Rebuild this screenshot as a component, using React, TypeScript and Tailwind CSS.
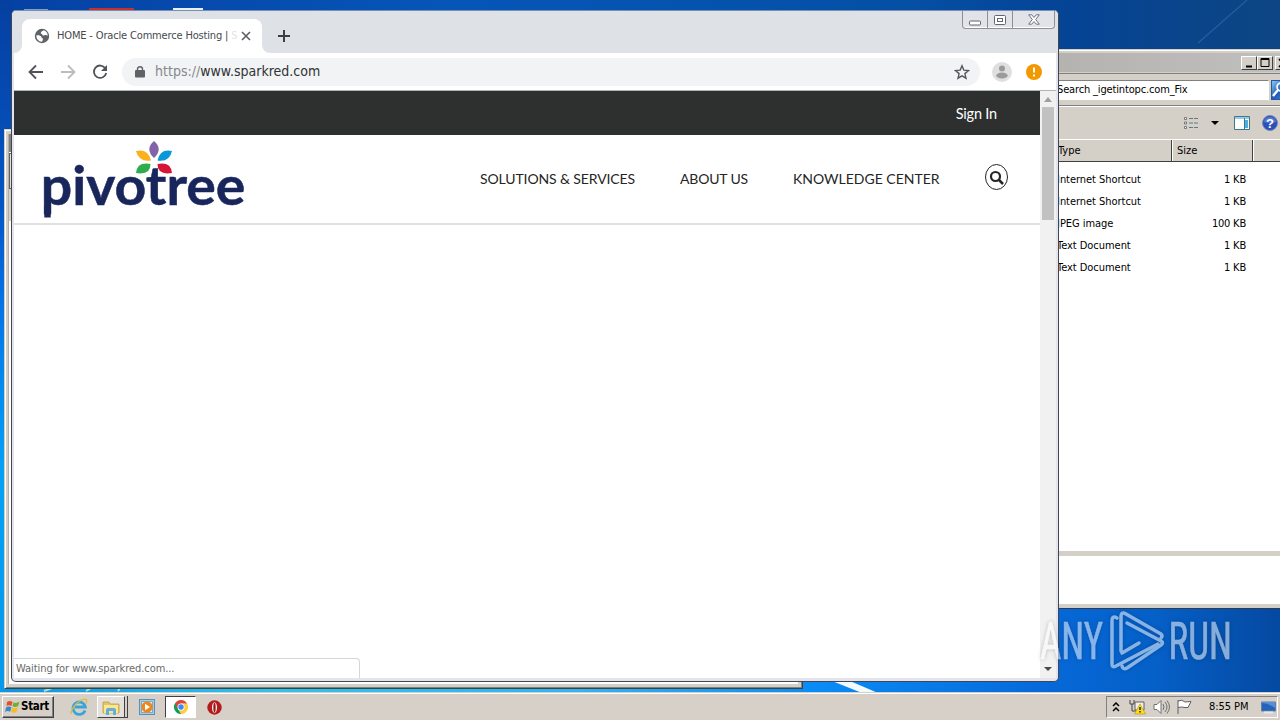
import { clsx } from "clsx";
import type { ReactNode } from "react";

const files = [
  { type: "Internet Shortcut", size: "1 KB" },
  { type: "Internet Shortcut", size: "1 KB" },
  { type: "JPEG image", size: "100 KB" },
  { type: "Text Document", size: "1 KB" },
  { type: "Text Document", size: "1 KB" },
];

const ui = "font-['Tahoma','DejaVu_Sans_Condensed','DejaVu_Sans',sans-serif]";

function Wallpaper() {
  return (
    <svg className="absolute inset-0" width="1280" height="720" viewBox="0 0 1280 720">
      <defs>
        <linearGradient id="left" x1="0" y1="0" x2="0" y2="1">
          <stop offset="0" stopColor="#0540a0" />
          <stop offset="0.28" stopColor="#0555c4" />
          <stop offset="0.42" stopColor="#0573e6" />
          <stop offset="0.65" stopColor="#05a0f5" />
          <stop offset="1" stopColor="#0898e8" />
        </linearGradient>
        <linearGradient id="top" x1="0" y1="0" x2="1" y2="0">
          <stop offset="0" stopColor="#0641a4" />
          <stop offset="0.35" stopColor="#0656b8" />
          <stop offset="0.7" stopColor="#0550a6" />
          <stop offset="0.84" stopColor="#054394" />
          <stop offset="1" stopColor="#0e4683" />
        </linearGradient>
        <linearGradient id="bottom" x1="0" y1="0" x2="1" y2="0">
          <stop offset="0" stopColor="#0a98e4" />
          <stop offset="0.2" stopColor="#2cc4ee" />
          <stop offset="0.45" stopColor="#30b4f2" />
          <stop offset="0.63" stopColor="#0a8cf6" />
          <stop offset="0.82" stopColor="#0668d8" />
          <stop offset="0.9" stopColor="#0560c8" />
          <stop offset="1" stopColor="#0549a0" />
        </linearGradient>
      </defs>
      <rect width="1280" height="720" fill="url(#left)" />
      <rect x="12" width="1268" height="400" fill="url(#top)" />
      <rect x="12" y="600" width="1268" height="120" fill="url(#bottom)" />
      <path d="M1247 0 1198 43" stroke="#5c8abb" strokeWidth="1.2" opacity=".35" />
      <path d="M832 681 850 681 878 693 862 693Z" fill="#fff" opacity=".95" />
      <path d="M44 691 52 688M86 691 91 688M118 691 120 688" stroke="#c4f4e0" strokeWidth="2" opacity=".8" />
      <rect x="24" y="9" width="24" height="2" fill="#7f9fc4" />
      <rect x="89" y="8" width="45" height="3" fill="#c9302c" />
      <rect x="173" y="8" width="30" height="3" fill="#e8f0f6" />
    </svg>
  );
}

function BackWindow() {
  return (
    <div className="absolute left-1 top-[129px] flex h-[560px] w-[799px] border border-[#d4d0c8] border-b-[#404040] border-r-[#404040] bg-[#d4d0c8] shadow-[inset_1px_1px_#fff,inset_-1px_-1px_#808080]">
      <div className="mb-1 ml-[3px] mr-1 mt-1 flex-1 border-l border-[#b0aca6] bg-white">
        <div className="h-[18px] bg-[#808080]" />
        <div className="mt-px h-9 border border-[#606060] bg-[#e4e1dc]" />
        <div className="h-8 bg-[#d4d0c8]" />
      </div>
    </div>
  );
}

function CaptionButton({ children }: { children: ReactNode }) {
  return (
    <div className="flex h-[14px] w-4 shrink-0 items-center justify-center border border-white border-b-[#404040] border-r-[#404040] bg-[#d4d0c8]">
      {children}
    </div>
  );
}

function Explorer() {
  return (
    <div className={clsx(ui, "absolute left-[1040px] top-[49px] flex h-[560px] w-[260px] flex-col border-y border-t-[#d4d0c8] border-b-[#303c50] bg-[#d4d0c8] pb-1 text-[11px] text-black")}>
      <div className="h-px shrink-0 bg-white" />
      <div className="mt-[2px] flex h-[19px] shrink-0 items-center bg-linear-to-r from-[#b4b2ae] to-[#c0c0c0] pl-[201px]">
        <CaptionButton>
          <svg width="12" height="12"><path d="M3 9.5h6" stroke="#000" strokeWidth="2" /></svg>
        </CaptionButton>
        <CaptionButton>
          <svg width="12" height="12"><path d="M2 1.500h8v8H2zM2 2.500h8" fill="none" stroke="#000" /></svg>
        </CaptionButton>
        <div className="w-[2px] shrink-0" />
        <CaptionButton>
          <svg width="12" height="12"><path d="m2 2 8 8M10 2 2 10" stroke="#000" strokeWidth="1.7" /></svg>
        </CaptionButton>
      </div>
      <div className="mt-px h-px shrink-0 bg-[#808080]" />
      <div className="flex h-[32px] shrink-0 items-center border-b border-[#808080] pt-px">
        <div className="flex h-[21px] w-[229px] items-center border border-r-[#fff] border-t-[#808080] border-[#d4d0c8] bg-white pl-[16px] pt-px">
          <span className="whitespace-nowrap text-[11px] tracking-[-0.15px]">Search _igetintopc.com_Fix</span>
        </div>
        <div className="ml-[2px] flex h-5 w-5 shrink-0 items-center border border-[#235a9e] bg-linear-to-br from-[#8ac8ee] via-[#2458bc] to-[#3c9ce0]">
          <svg width="18" height="18" viewBox="0 0 18 18" fill="none" stroke="#fff">
            <circle cx="9" cy="6" r="4" strokeWidth="1.6" />
            <path d="M6 9 1 15" strokeWidth="2.4" />
          </svg>
        </div>
      </div>
      <div className="flex h-[33px] shrink-0 items-center border-t border-white pl-[143px]">
        <svg width="16" height="14" viewBox="0 0 16 14" fill="none">
          <path d="M1.500 1.500h2v2h-2zM1.500 6h2v2h-2zM1.500 10.500h2v2h-2z" fill="#fff" stroke="#777" />
          <path d="M6 2.500h4M11 2.500h4M6 7h4M11 7h4M6 11.500h4M11 11.500h4" stroke="#607a88" />
        </svg>
        <svg className="ml-3" width="8" height="5"><path d="M0 0h8L4 4z" fill="#000" /></svg>
        <svg className="ml-[15px]" width="16" height="14" viewBox="0 0 16 14">
          <path d="M.5.5h15v13H.5z" fill="#fff" stroke="#3b7893" />
          <path d="M1 1h14v2H1z" fill="#9acbe0" />
          <path d="M11 4h3v8h-3z" fill="#4fb2dc" />
          <path d="M10.500 2v11" stroke="#3b7893" />
        </svg>
        <svg className="ml-3 shrink-0" width="16" height="16" viewBox="0 0 16 16">
          <circle cx="8" cy="8" r="7.500" fill="#2c4fb8" stroke="#7187b8" />
          <path d="M2 7a6 5 0 0 1 12 0Q8 9 2 7" fill="#6f92e0" opacity=".6" />
          <text x="8" y="12.500" textAnchor="middle" fontSize="13" fontWeight="700" fill="#fff" fontFamily="Liberation Sans, sans-serif">?</text>
        </svg>
      </div>
      <div className="flex h-[23px] shrink-0 items-center border-b border-[#404040] pt-px shadow-[inset_0_1px_#fff]">
        <div className="flex h-full w-[132px] items-center border-r border-[#404040] pl-[18px] pt-px">Type</div>
        <div className="flex h-full w-[81px] items-center border-l border-r border-l-white border-r-[#404040] pl-1 pt-px">Size</div>
        <div className="h-full flex-1 border-l border-white" />
      </div>
      <div className="flex-1 bg-white pt-[7px]">
        {files.map((file, i) => (
          <div key={i} className="flex h-[22px] items-center">
            <span className="w-[130px] whitespace-nowrap pl-[17px] tracking-[-0.04px]">{file.type}</span>
            <span className="w-[76px] whitespace-nowrap text-right tracking-[-0.2px]">{file.size}</span>
          </div>
        ))}
      </div>
      <div className="h-[5px] shrink-0 bg-[#d4d0c8]" />
      <div className="h-[48px] shrink-0 bg-white" />
    </div>
  );
}

function TabStrip() {
  return (
    <div className="flex h-[42px] shrink-0 items-end bg-[#dee1e6] pl-[10px]">
      <div className="relative flex h-[34px] w-[240px] items-center rounded-t-lg bg-white pl-3">
        <svg className="absolute -left-2 bottom-0" width="8" height="8"><path d="M8 0v8H0a8 8 0 0 0 8-8" fill="#fff" /></svg>
        <svg className="absolute -right-2 bottom-0" width="8" height="8"><path d="M0 0v8h8a8 8 0 0 1-8-8" fill="#fff" /></svg>
        <svg width="16" height="16" viewBox="0 0 16 16">
          <circle cx="8" cy="8" r="7.200" fill="#5f6368" />
          <path d="M9.500 2.200C8 3.700 7 3.500 6.800 4.700 6.500 6 8 5.500 8.200 6.500c.2 1 1.300 1.300 2.300.8 1.200-.5 2-.3 3.200.4A5.700 5.700 0 0 0 9.500 2.200M2.400 7.300c1.800-.3 3.800.1 4.600 1 .7.800.4 1.700 1.500 2 .9.300.5 1.500-.5 3.500-3.400 0-5.900-3-5.600-6.500" fill="#fff" />
        </svg>
        <span className="ml-[7px] w-[178px] whitespace-nowrap pt-px text-[11px] tracking-[-0.16px] text-[#45494d]">
          HOME - Oracle Commerce Hosting | <span className="text-[#e4e5e6]">S</span>
        </span>
        <svg className="ml-[6px]" width="10" height="10"><path d="m1 1 8 8M9 1 1 9" stroke="#5f6368" strokeWidth="1.700" /></svg>
      </div>
      <svg className="mb-[11px] ml-4" width="12" height="12"><path d="M6 0v12M0 6h12" stroke="#3c4043" strokeWidth="2" /></svg>
    </div>
  );
}

function WindowButtons() {
  return (
    <div className="absolute right-[3px] top-0 flex h-[18px] rounded-b-[4px] border border-t-0 border-[#8b8f96] bg-[#e1e3e9] shadow-[inset_0_-1px_#fff]">
      <div className="flex w-[25px] items-center justify-center border-r border-[#8b8f96]">
        <svg width="12" height="12"><rect x=".5" y="7" width="11" height="4" rx="1" fill="#fff" stroke="#606474" /></svg>
      </div>
      <div className="flex w-[25px] items-center justify-center border-r border-[#8b8f96]">
        <svg width="12" height="12"><rect x=".5" y="1.500" width="11" height="9" rx="1" fill="#fff" stroke="#606474" /><rect x="3.500" y="4.500" width="5" height="3" fill="#fff" stroke="#606474" /></svg>
      </div>
      <div className="flex w-[41px] items-center justify-center">
        <svg width="12" height="12" viewBox="0 0 12 12"><path d="M.7.800h3L6 3.500 8.300.8h3L7.700 5.500l3.600 4.700h-3L6 7.500l-2.300 2.700h-3l3.600-4.700z" fill="#fff" stroke="#606474" strokeWidth=".9" /></svg>
      </div>
    </div>
  );
}

function Toolbar() {
  return (
    <div className="flex h-[38px] shrink-0 items-center border-b border-[#b0b2b3] bg-white pl-[14px]">
      <svg width="16" height="16" viewBox="0 0 16 16" fill="none" stroke="#505458" strokeWidth="1.800"><path d="M15 8H2M8 1.500 1.500 8 8 14.500" /></svg>
      <svg className="ml-4" width="16" height="16" viewBox="0 0 16 16" fill="none" stroke="#babcbe" strokeWidth="1.800"><path d="M1 8h13M8 1.500 14.500 8 8 14.500" /></svg>
      <svg className="ml-4" width="16" height="16" viewBox="0 0 16 16">
        <path d="M13.300 4.300A6.200 6.200 0 1 0 14.200 9" fill="none" stroke="#505458" strokeWidth="1.800" />
        <path d="M15 1v6H9z" fill="#505458" />
      </svg>
      <div className="ml-[14px] flex h-7 w-[858px] items-center rounded-full bg-[#f1f3f4] pl-[13px] pr-[10px]">
        <svg width="10" height="12" viewBox="0 0 10 12"><path d="M2.500 5V3a2.500 2.300 0 0 1 5 0v2" fill="none" stroke="#5f6368" strokeWidth="1.400" /><rect y="4" width="10" height="7.500" rx="1" fill="#5f6368" /></svg>
        <span className="ml-[10px] flex-1 whitespace-nowrap text-[14px] tracking-[0.01px] text-[#303236]">
          <span className="text-[#85898e]">https://</span>www.sparkred.com
        </span>
        <svg width="16" height="16" viewBox="0 0 16 16"><path d="m8 1.800 1.800 4.300 4.700.4-3.600 3.100 1.100 4.600L8 11.800l-4 2.400 1.100-4.600-3.600-3.100 4.700-.4z" fill="none" stroke="#55595e" strokeWidth="1.400" /></svg>
      </div>
      <svg className="ml-3" width="20" height="20" viewBox="0 0 20 20">
        <circle cx="10" cy="10" r="10" fill="#dfdfdf" />
        <circle cx="10" cy="6.500" r="3" fill="#9a9a9a" />
        <ellipse cx="10" cy="13.500" rx="5.700" ry="3" fill="#9a9a9a" />
      </svg>
      <svg className="ml-[14px]" width="16" height="16" viewBox="0 0 16 16">
        <circle cx="8" cy="8" r="8" fill="#f29900" />
        <path d="M8 3.500v5M8 10.500v2" stroke="#fff" strokeWidth="2" />
      </svg>
    </div>
  );
}

function PivotreeLogo() {
  return (
    <svg className="mt-[4px] block" width="206" height="82" viewBox="42 139 206 82">
      <path d="M154 141q-9.500 8 0 17 9.500-9 0-17" fill="#8561a9" />
      <path d="M136 151q12-2.500 15 9.500-12 2-15-9.500" fill="#fbb01c" />
      <path d="M172 151q-12-2.500-14.500 9.500 12 2 14.500-9.500" fill="#0a98d9" />
      <path d="M136 173q1-11.500 14.500-9 0 11.500-14.500 9" fill="#2fac4b" />
      <path d="M172 173q-1-11.500-14.500-9 0 11.500 14.500 9" fill="#d51635" />
      <path d="M44.300 206h6.400v11.500h-6.400z" fill="#18265b" />
      <text x="40.800" y="204.700" textLength="204.500" lengthAdjust="spacingAndGlyphs" fontFamily="Lato, sans-serif" fontWeight="700" fontSize="54" fill="#18265b" stroke="#18265b" strokeWidth=".5">pivotree</text>
    </svg>
  );
}

function Page() {
  return (
    <div className="min-w-0 flex-1 bg-white font-[Lato,sans-serif] text-[#252525]">
      <div className="flex h-[44px] items-center justify-end bg-[#2d302f] pr-[43px] pt-[2px] text-[14.5px] tracking-[-0.2px] text-white">Sign In</div>
      <div className="flex h-[90px] border-b-2 border-[#e1e1e1] pl-7">
        <PivotreeLogo />
        <div className="ml-[232px] flex h-[85px] items-center whitespace-nowrap text-[14px]">
          <span className="w-[200px] pt-px tracking-[-0.12px]">SOLUTIONS &amp; SERVICES</span>
          <span className="w-[113px] pt-px tracking-[-0.17px]">ABOUT US</span>
          <span className="w-[191px] pt-px">KNOWLEDGE CENTER</span>
          <svg width="25" height="27" viewBox="0 0 25 27" fill="none" stroke="#252525">
            <ellipse cx="12.500" cy="13" rx="11" ry="12.500" />
            <circle cx="11.500" cy="12.500" r="4.500" strokeWidth="2.200" />
            <path d="m15 16 4 4" strokeWidth="2.500" />
          </svg>
        </div>
      </div>
    </div>
  );
}

function Browser() {
  return (
    <div className={clsx(ui, "absolute left-[11px] top-[10px] flex h-[672px] w-[1048px] flex-col rounded-[5px] border border-[#42464f] border-t-[#7690b4] bg-[#e3e4ed] px-[2px] pb-[3px]")}>
      <div className="-mx-[2px] flex shrink-0 flex-col overflow-hidden rounded-t-[4px] bg-[#dee1e6]">
        <TabStrip />
      </div>
      <WindowButtons />
      <Toolbar />
      <div className="flex min-h-0 flex-1">
        <Page />
        <div className="flex w-4 shrink-0 flex-col items-center bg-[#f1f1f1]">
          <svg width="16" height="16"><path d="M4 11h8l-4-5z" fill="#a0a0a0" /></svg>
          <div className="h-[113px] w-3 bg-[#c1c1c1]" />
          <svg className="mt-auto" width="16" height="17"><path d="M4 6h8l-4 4z" fill="#484848" /></svg>
        </div>
      </div>
      <div className="absolute bottom-[3px] left-[2px] flex h-5 w-[346px] items-center rounded-tr-[4px] border-r border-t border-[#d4d6d8] bg-white pl-[2px] pt-[2px] text-[11px] tracking-[-0.07px] text-[#696969]">
        Waiting for www.sparkred.com...
      </div>
    </div>
  );
}

function Watermark() {
  return (
    <svg className="absolute left-[1030px] top-[600px] overflow-visible drop-shadow-[0_0_2px_rgba(0,0,0,0.4)]" width="240" height="82" viewBox="1030 600 240 82" opacity=".52">
      <g fill="#fff" fontFamily="Roboto Condensed, Roboto, sans-serif" fontSize="52" stroke="#fff" strokeWidth=".6">
        <text x="1040" y="659" textLength="63" lengthAdjust="spacingAndGlyphs">ANY</text>
        <text x="1168.500" y="659" textLength="63.500" lengthAdjust="spacingAndGlyphs">RUN</text>
      </g>
      <g fill="none" stroke="#fff" strokeWidth="3.500" strokeLinejoin="round" strokeLinecap="round">
        <path d="M1117 618q-5-3-5 3v43q0 4 4 2l42-22" />
        <path d="M1121 651v-34q0-6 5-3l35 20q2 2 0 4" />
        <path d="m1127 623 34 18q3 2 0 4l-34 23q-4 2-5-2" />
        <path d="m1122 653 17-10" />
      </g>
    </svg>
  );
}

function Taskbar() {
  return (
    <div className={clsx(ui, "absolute inset-x-0 bottom-0 flex h-[28px] items-center border-t border-[#d4d0c8] bg-[#d6d0c8] pt-px text-[11px] text-black shadow-[inset_0_1px_#fff]")}>
      <div className="ml-[2px] flex h-[22px] w-[52px] items-center border border-white border-b-[#404040] border-r-[#404040] pl-[2px] shadow-[inset_-1px_-1px_#808080]">
        <svg className="shrink-0" width="16" height="16" viewBox="0 0 16 16">
          <path d="M2 3q3-2 5.500 0L6.500 7q-3-1.500-5 0z" fill="#e45129" />
          <path d="M8.500 3.300q3 1.500 6-.8l-1.300 4.500q-3 1.700-5.700.3z" fill="#70ae37" />
          <path d="M1.200 8.300q2.500-1.500 5.200 0l-1.200 4.500Q2.500 11.300 0 13z" fill="#3787cb" />
          <path d="M7.300 8.600q2.700 1.600 5.700-.3l-1.300 4.500q-3 1.800-5.500.3z" fill="#f5bd22" />
        </svg>
        <span className="text-[11.5px] font-bold tracking-[-0.3px]">Start</span>
      </div>
      <svg className="ml-4" width="18" height="18" viewBox="0 0 18 18" fill="none">
        <path d="M15 12.500A6.200 6.200 0 1 1 15.300 9H5" stroke="#36a5dc" strokeWidth="2.800" />
        <path d="M2 15.500C-2 16 8-.5 16 1.500c1.500.5.500 3 0 4" stroke="#e4b93b" strokeWidth="1.300" />
      </svg>
      <div className="ml-[9px] flex h-[22px] w-[28px] items-center justify-center border border-white border-b-[#404040] border-r-[#404040] bg-[#e4e1dc]">
        <svg width="18" height="17" viewBox="0 0 18 17">
          <path d="M1 3h6l1 2h9v9H1z" fill="#e6c75d" stroke="#be9d41" strokeWidth=".8" />
          <path d="M2 6h14v8H2z" fill="#f8e795" />
          <path d="M4 16v-5q0-2 2-2h6q2 0 2 2v5h-3v-4H7v4z" fill="#68add3" />
        </svg>
      </div>
      <div className="h-[22px] w-[3px] border-b border-r border-[#404040]" />
      <svg className="ml-[11px]" width="16" height="16" viewBox="0 0 16 16">
        <rect x=".5" y=".5" width="15" height="15" fill="#a9cce5" stroke="#5890b8" />
        <rect x="2.500" y="2.500" width="11" height="11" fill="#ddeaf3" stroke="#7fa9c5" />
        <circle cx="8" cy="8" r="5.600" fill="#ef8718" />
        <path d="m6 4.800 5 3.200-5 3.200z" fill="#fff" />
      </svg>
      <div className="ml-[10px] flex h-[22px] w-[31px] items-center justify-center border border-[#404040] border-b-white border-r-white bg-white">
        <svg width="14" height="14" viewBox="0 0 16 16">
          <path d="M8 8 14.930 4A8 8 0 0 1 8 16z" fill="#ffcd40" />
          <path d="M8 8v8A8 8 0 0 1 1.070 4z" fill="#109b58" />
          <path d="M8 4h7L11.500 10 8 16 4.500 10 8 8z" fill="#ffcd40" />
          <path d="M1.070 4 4.500 10 8 8V4h6.930A8 8 0 0 0 1.070 4" fill="#dc4438" />
          <circle cx="8" cy="8" r="4" fill="#fff" />
          <circle cx="8" cy="8" r="3.100" fill="#4285f4" />
        </svg>
      </div>
      <svg className="ml-[11px]" width="15" height="15" viewBox="0 0 16 16">
        <circle cx="8" cy="8" r="7.700" fill="#b31c1c" />
        <ellipse cx="8" cy="8" rx="2.700" ry="5.700" fill="#f4f0ee" />
        <ellipse cx="8" cy="8" rx="1.200" ry="5.200" fill="#991111" />
      </svg>
      <div className="ml-auto mr-[2px] flex h-[22px] w-[172px] shrink-0 items-center border border-[#808080] border-b-white border-r-white pl-[5px]">
        <svg width="8" height="10" fill="none" stroke="#000" strokeWidth="1.500"><path d="m1 4 3-3 3 3M1 9l3-3 3 3" /></svg>
        <svg className="ml-[9px]" width="17" height="16" viewBox="0 0 17 16">
          <path d="M6 3h9v8H6z" fill="#eee" stroke="#606060" />
          <path d="M1 1v4h4V1M3 5v7h4" fill="none" stroke="#444" />
          <path d="m11 5 5.500 10h-11z" fill="#ffdc22" stroke="#b89e15" strokeWidth=".7" />
          <path d="M11 8v3M11 12v1.500" stroke="#111" strokeWidth="1.300" />
        </svg>
        <svg className="ml-[7px]" width="17" height="16" viewBox="0 0 17 16" fill="none" stroke="#707070">
          <path d="M1 5.500h3L8 1.500v13l-4-4H1z" fill="#fff" />
          <path d="M10 5q2 3 0 6M12 3q4 5 0 10M14 1.500q5 6.500 0 13" />
        </svg>
        <svg className="ml-[7px]" width="16" height="16" viewBox="0 0 16 16"><path d="M1 15V1M1 2q4-2 7 1l6-.5-3 6H8Q5 7.500 1 8.500" fill="#fff" stroke="#606060" /></svg>
        <span className="ml-4 whitespace-nowrap pt-px tracking-[-0.05px]">8:55 PM</span>
        <svg className="ml-[12px] shrink-0" width="15" height="14" viewBox="0 0 15 14"><path d="M.5 2h14v9H.5z" fill="#2564bd" stroke="#657f9e" /><path d="M1 3q6 0 13 5V2H1" fill="#568fd6" /><path d="M3 12.500h9" stroke="#e4e8ec" strokeWidth="2" /></svg>
      </div>
    </div>
  );
}

export default function App() {
  return (
    <main className="relative h-[720px] w-[1280px] overflow-hidden bg-[#0555c4]">
      <Wallpaper />
      <BackWindow />
      <Explorer />
      <Browser />
      <Taskbar />
      <Watermark />
    </main>
  );
}
